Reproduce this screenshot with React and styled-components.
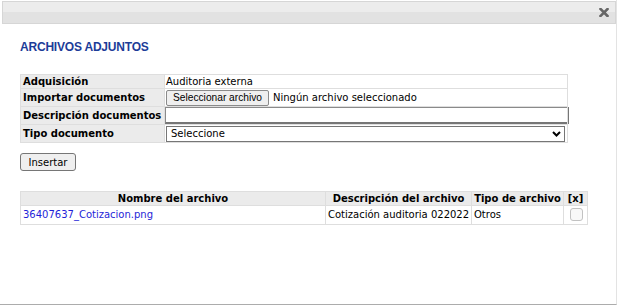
import { createGlobalStyle } from "styled-components";
import styled from "styled-components";

const GlobalStyle = createGlobalStyle`
  html, body {
    margin: 0;
    padding: 0;
    background: #fff;
    font-family: "DejaVu Sans", Verdana, sans-serif;
    font-size: 10px;
    line-height: 12px;
    color: #000;
  }
`;

const Dialog = styled.div`
  width: 617px;
  height: 305px;
  box-sizing: border-box;
  padding: 1px 0 0 2px;
  border-right: 1px solid #e3e3e3;
  border-bottom: 1px solid #acacac;
  background: #fff;
  display: flex;
  flex-direction: column;
`;

const TitleBar = styled.div`
  height: 23px;
  box-sizing: border-box;
  border: 1px solid #d6d6d6;
  background: linear-gradient(to bottom, #ececec 0, #ececec 50%, #e2e2e2 50%, #e2e2e2 100%);
  display: flex;
  align-items: center;
  justify-content: flex-end;
  padding-right: 6px;
`;

const CloseBtn = styled.button`
  border: 0;
  background: transparent;
  padding: 0;
  width: 10px;
  height: 10px;
  display: flex;
  cursor: pointer;
`;

const Content = styled.div`
  padding: 0 0 0 18px;
`;

const Heading = styled.h2`
  margin: 16px 0 0;
  font-family: "Liberation Sans", Arial, sans-serif;
  font-weight: bold;
  font-size: 12px;
  letter-spacing: -0.2px;
  line-height: 15px;
  color: #1c3c98;
`;

const FormTable = styled.table`
  margin-top: 19px;
  width: 548px;
  border-collapse: collapse;
  table-layout: fixed;

  td {
    border: 1px solid #dedede;
    padding: 0 1px;
    height: 17px;
    box-sizing: border-box;
  }
`;

const Row = styled.tr`
  td {
    height: ${(p) => p.$h || 18}px;
  }
`;

const Label = styled.td`
  width: 144px;
  background: #ebebeb;
  font-weight: bold;
  white-space: nowrap;
  padding-left: 2px !important;
`;

const Value = styled.td`
  white-space: nowrap;
`;

const FileBtn = styled.button`
  font-family: "Liberation Sans", Arial, sans-serif;
  font-size: 10.2px;
  height: 16px;
  width: 103px;
  padding: 0;
  margin: 0 4px 0 0;
  border: 1px solid #8a8a8a;
  border-radius: 2px;
  background: #efefef;
  color: #000;
  vertical-align: middle;
`;

const TextInput = styled.input`
  width: 404px;
  height: 17px;
  box-sizing: border-box;
  margin: 0 0 0 -1px;
  border-style: solid;
  border-width: 1px 2px 2px 1px;
  border-color: #8a8a8a #767676 #767676 #8a8a8a;
  padding: 0 4px;
  display: block;
  font: inherit;
`;

const SelectWrap = styled.div`
  position: relative;
  width: 399px;
`;

const Select = styled.select`
  appearance: none;
  width: 100%;
  height: 16px;
  box-sizing: border-box;
  border: 1px solid #767676;
  border-radius: 0;
  background: #fff;
  padding: 0 4px;
  font: inherit;
  display: block;
  color: #000;
`;

const Chevron = styled.svg`
  position: absolute;
  right: 4px;
  top: 5px;
  pointer-events: none;
`;

const Button = styled.button`
  margin-top: 10px;
  font-family: "DejaVu Sans", Verdana, sans-serif;
  font-size: 10px;
  height: 18px;
  width: 56px;
  padding: 0;
  border: 1px solid #767676;
  border-radius: 3px;
  background: #efefef;
  color: #000;
`;

const FilesTable = styled.table`
  margin-top: 20px;
  width: 567px;
  border-collapse: collapse;
  table-layout: fixed;

  th, td {
    border: 1px solid #dedede;
    padding: 0 2px;
    white-space: nowrap;
    box-sizing: border-box;
  }
  th {
    background: #ebebeb;
    font-weight: bold;
    height: 14px;
    text-align: center;
  }
  td {
    height: 19px;
  }
`;

const FileLink = styled.a`
  color: #1f1fd8;
  text-decoration: none;
`;

const Check = styled.input`
  appearance: none;
  margin: -2px 0 0 4px;
  width: 13px;
  height: 13px;
  box-sizing: border-box;
  border: 1px solid #c2c2c2;
  border-radius: 3px;
  background: #f8f8f8;
  display: block;
`;

export default function App() {
  return (
    <>
      <GlobalStyle />
      <Dialog>
        <TitleBar>
          <CloseBtn aria-label="close">
            <svg width="10" height="9" viewBox="0 0 10 9">
              <path d="M1.5 1L8.5 8M8.5 1L1.5 8" stroke="#666" strokeWidth="2.6" strokeLinecap="square" />
            </svg>
          </CloseBtn>
        </TitleBar>
        <Content>
          <Heading>ARCHIVOS ADJUNTOS</Heading>
          <FormTable>
            <tbody>
              <Row $h={14}>
                <Label>Adquisición</Label>
                <Value>Auditoria externa</Value>
              </Row>
              <Row>
                <Label>Importar documentos</Label>
                <Value>
                  <FileBtn>Seleccionar archivo</FileBtn>
                  Ningún archivo seleccionado
                </Value>
              </Row>
              <Row>
                <Label>Descripción documentos</Label>
                <Value>
                  <TextInput type="text" />
                </Value>
              </Row>
              <Row>
                <Label>Tipo documento</Label>
                <Value>
                  <SelectWrap>
                    <Select defaultValue="">
                      <option value="">Seleccione</option>
                    </Select>
                    <Chevron width="9" height="6" viewBox="0 0 9 6">
                      <path d="M1 1L4.5 4.5L8 1" fill="none" stroke="#000" strokeWidth="2" />
                    </Chevron>
                  </SelectWrap>
                </Value>
              </Row>
            </tbody>
          </FormTable>
          <Button>Insertar</Button>
          <FilesTable>
            <colgroup>
              <col style={{ width: 305 }} />
              <col style={{ width: 146 }} />
              <col style={{ width: 92 }} />
              <col style={{ width: 24 }} />
            </colgroup>
            <thead>
              <tr>
                <th>Nombre del archivo</th>
                <th>Descripción del archivo</th>
                <th>Tipo de archivo</th>
                <th>[x]</th>
              </tr>
            </thead>
            <tbody>
              <tr>
                <td>
                  <FileLink href="#">36407637_Cotizacion.png</FileLink>
                </td>
                <td>Cotización auditoria 022022</td>
                <td>Otros</td>
                <td>
                  <Check type="checkbox" />
                </td>
              </tr>
            </tbody>
          </FilesTable>
        </Content>
      </Dialog>
    </>
  );
}
